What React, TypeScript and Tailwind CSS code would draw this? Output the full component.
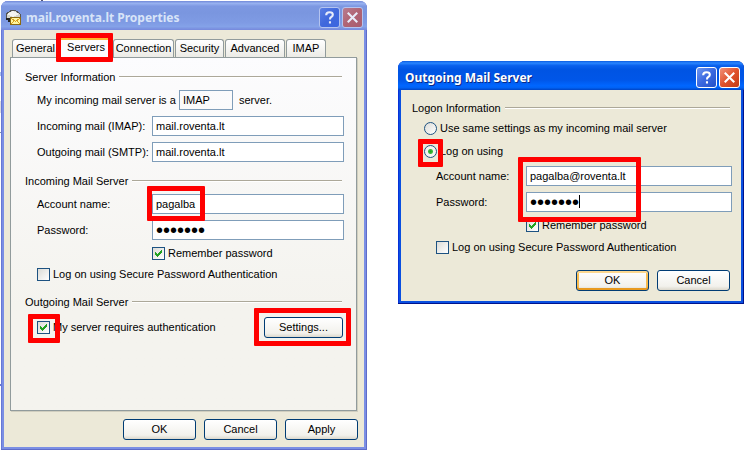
import { useState, type ReactNode } from 'react';
import clsx from 'clsx';

interface DialogProps {
  title: string;
  active?: boolean;
  icon?: ReactNode;
  className?: string;
  children: ReactNode;
}

function Dialog({ title, active = false, icon, className, children }: DialogProps) {
  return (
    <section
      aria-label={title}
      className={clsx(
        'flex min-w-0 flex-col rounded-t-[7px] px-[3px] pb-[3px]',
        active
          ? 'bg-[#0a50e0] shadow-[inset_-1px_-1px_0_#00138c,inset_1px_0_0_#0831d9]'
          : 'bg-[#7b8fe4] shadow-[inset_-1px_-1px_0_#5f6cc8,inset_1px_0_0_#6778d4]',
        className,
      )}
    >
      <header
        className={clsx(
          '-mx-[3px] flex h-[29px] shrink-0 items-center gap-1 rounded-t-[7px] pr-1 pt-1',
          active
            ? 'bg-[linear-gradient(#0a5ae0_0%,#2a86ff_7%,#0a60ec_16%,#0054e3_30%,#0056e8_65%,#0066ff_85%,#0062f5_92%,#0044c4_100%)] pl-[7px]'
            : 'bg-[linear-gradient(#7088d8_0%,#98b2f0_8%,#7d98e2_18%,#7a96df_40%,#7f9be4_75%,#84a2e8_88%,#7688dc_100%)] pl-1',
        )}
      >
        {icon}
        <h1
          className={clsx(
            'min-w-0 flex-1 truncate font-["Noto_Sans","Open_Sans",sans-serif] text-[12px] leading-4 font-bold',
            active ? 'text-white [text-shadow:1px_1px_0_#0a2a86]' : 'text-[#d8e4f8]',
          )}
        >
          {title}
        </h1>
        <div className="flex gap-0.5">
          <TitleButton label="Help" active={active}>
            <path d="M6.5 7.5Q6.5 4.5 10 4.5Q13.5 4.5 13.5 7Q13.5 8.5 11.8 9.5Q10.5 10.2 10.5 12.2M10.5 14V16.2" />
          </TitleButton>
          <TitleButton label="Close" active={active} close>
            <path d="M5 5L15 15M15 5L5 15" />
          </TitleButton>
        </div>
      </header>
      <div className="flex-1 bg-[#ece9d8]">{children}</div>
    </section>
  );
}

interface TitleButtonProps {
  label: string;
  active: boolean;
  close?: boolean;
  children: ReactNode;
}

function TitleButton({ label, active, close = false, children }: TitleButtonProps) {
  return (
    <button
      type="button"
      aria-label={label}
      className={clsx(
        'size-[21px] rounded-[3px] border',
        active ? 'border-white' : 'border-[#b4c4f0]',
        active && !close && 'bg-linear-to-br from-[#6f96f0] via-[#3a68e0] to-[#2450c8]',
        active && close && 'bg-linear-to-br from-[#f09078] via-[#e0522c] to-[#c43c14]',
        !active && !close && 'bg-linear-to-br from-[#5b7fe4] via-[#4068dc] to-[#3c66e0]',
        !active && close && 'bg-linear-to-br from-[#b87c90] via-[#b06474] to-[#a85c70]',
      )}
    >
      <svg viewBox="0 0 20 20" className="size-full" fill="none" stroke={active ? '#fff' : '#e8ecfa'} strokeWidth="2.2">
        {children}
      </svg>
    </button>
  );
}

function MailIcon() {
  return (
    <svg viewBox="0 0 17 17" className="size-[17px] shrink-0" shapeRendering="crispEdges">
      <path d="M1 5L7 1H10L15 5V9L12 12H5L1 8Z" fill="#d4d4cc" stroke="#555" />
      <path d="M2 5L8 2L14 5L8 8Z" fill="#f4f4f0" />
      <path d="M1 9H5V13H3V11H1Z" fill="#222" />
      <rect x="5.5" y="8.5" width="10" height="7" fill="#fff6a0" stroke="#8c6a10" />
      <path d="M6 9L10.5 12.5L15 9M6 15L9 12M15 15L12 12" fill="none" stroke="#d8a020" />
    </svg>
  );
}

// red marker drawn over the control it belongs to
function Mark({ className }: { className: string }) {
  return <span className={clsx('pointer-events-none absolute z-10 rounded-[1px] border-[5px] border-[#ff0000]', className)} />;
}

function GroupTitle({ children, className }: { children: ReactNode; className?: string }) {
  return (
    <h2 className={clsx('flex h-5 items-center gap-1 pr-0.5', className)}>
      {children}
      <span className="h-0.5 flex-1 border-b border-white bg-[#aca899]" />
    </h2>
  );
}

interface FieldProps {
  id: string;
  label: string;
  initial: string;
  type?: string;
  labelWidth?: string;
  className?: string;
  children?: ReactNode;
}

function Field({ id, label, initial, type = 'text', labelWidth = 'w-[115px]', className, children }: FieldProps) {
  const [value, setValue] = useState(initial);

  return (
    <div className={clsx('flex h-5 items-center', className)}>
      <label htmlFor={id} className={clsx('shrink-0', labelWidth)}>
        {label}
      </label>
      <div className="relative min-w-0 flex-1">
        <input
          id={id}
          type={type}
          value={value}
          onChange={(e) => setValue(e.target.value)}
          className={clsx(
            'block h-5 w-full border border-[#7f9db9] bg-white px-[3px] outline-none',
            type === 'password' && 'text-[20px]',
          )}
        />
        {children}
      </div>
    </div>
  );
}

interface TickProps {
  label: string;
  checked?: boolean;
  className?: string;
  children?: ReactNode;
}

function Tick({ label, checked = false, className, children }: TickProps) {
  return (
    <label className={clsx('flex h-[13px] items-center gap-[3px]', className)}>
      <span className="relative size-[13px] shrink-0">
        <input
          type="checkbox"
          defaultChecked={checked}
          className="peer block size-[13px] appearance-none border border-[#1d5281] bg-linear-to-br from-[#dcdcd7] to-white"
        />
        <svg
          viewBox="0 0 13 13"
          className="pointer-events-none absolute inset-0 hidden size-[13px] peer-checked:block"
          shapeRendering="crispEdges"
        >
          <path d="M3 5h1v1h1v1h1V6h1V5h1V4h1V3h1v3H9v1H8v1H7v1H6v1H5V9H4V8H3z" fill="#21a121" />
        </svg>
        {children}
      </span>
      {label}
    </label>
  );
}

function Radio({ label, checked = false, className, children }: TickProps) {
  return (
    <label className={clsx('flex h-[13px] items-center gap-[3px]', className)}>
      <span className="relative size-[13px] shrink-0">
        <input
          type="radio"
          name="logon"
          defaultChecked={checked}
          className="block size-[13px] appearance-none rounded-full border border-[#1d5281] bg-linear-to-br from-[#dcdcd7] to-white checked:bg-[radial-gradient(circle,#21a121_0,#3cb83c_2px,#f4f4f0_3px)]"
        />
        {children}
      </span>
      {label}
    </label>
  );
}

function PushButton({ children, primary = false, className }: { children: ReactNode; primary?: boolean; className?: string }) {
  return (
    <button
      type="button"
      className={clsx(
        'h-[21px] rounded-[3px] border border-[#003c74] bg-[linear-gradient(#ffffff,#f2f1ec_80%,#dcd8cc)] text-center',
        primary && 'shadow-[inset_0_2px_0_#fcd890,inset_0_-2px_0_#e89a20,inset_2px_0_0_#f8bc50,inset_-2px_0_0_#f8bc50]',
        className ?? 'w-[73px]',
      )}
    >
      {children}
    </button>
  );
}

const tabs = [
  { name: 'General', width: 'w-[47px]' },
  { name: 'Servers', width: 'w-[52px]' },
  { name: 'Connection', width: 'w-[61px]' },
  { name: 'Security', width: 'w-[49px]' },
  { name: 'Advanced', width: 'w-[60px]' },
  { name: 'IMAP', width: 'w-[40px]' },
];

function Tabs() {
  return (
    <div role="tablist" className="flex h-[27px] items-end gap-px pl-2">
      {tabs.map(({ name, width }) =>
        name === 'Servers' ? (
          <div key={name} className={clsx('relative z-10 -mb-px', width)}>
            <button
              type="button"
              role="tab"
              aria-selected
              className="block h-[21px] w-full rounded-t-[3px] border-x border-t-[3px] border-x-[#919b9c] border-t-[#ffb52c] bg-[#fcfcfe] pb-1"
            >
              {name}
            </button>
            <Mark className="-top-1 -right-px -bottom-1 -left-1" />
          </div>
        ) : (
          <button
            key={name}
            type="button"
            role="tab"
            aria-selected={false}
            className={clsx(
              'h-[18px] rounded-t-[3px] border border-b-0 border-[#919b9c] bg-linear-to-b from-white to-[#ecebe6]',
              width,
            )}
          >
            {name}
          </button>
        ),
      )}
    </div>
  );
}

function PropertiesDialog() {
  return (
    <Dialog title="mail.roventa.lt Properties" icon={<MailIcon />} className="mt-px">
      <Tabs />
      <div
        role="tabpanel"
        className="mr-[7px] ml-1.5 border border-[#919b9c] bg-linear-to-b from-[#fcfcfe] to-[#f4f3ee] to-70% pt-[9px] pr-3 pb-[72px] pl-3.5 shadow-[1px_1px_0_#d0cebf]"
      >
        <GroupTitle>Server Information</GroupTitle>
        <div className="mt-[3px] flex h-5 items-center pl-3">
          <label htmlFor="kind" className="w-[142px]">
            My incoming mail server is a
          </label>
          <input
            id="kind"
            readOnly
            value="IMAP"
            className="h-5 w-[54px] border border-[#7f9db9] bg-transparent px-[3px] outline-none"
          />
          <span className="pl-1.5">server.</span>
        </div>
        <Field id="incoming" label="Incoming mail (IMAP):" initial="mail.roventa.lt" className="mt-1.5 pl-3" />
        <Field id="outgoing" label="Outgoing mail (SMTP):" initial="mail.roventa.lt" className="mt-1.5 pl-3" />

        <GroupTitle className="mt-[9px]">Incoming Mail Server</GroupTitle>
        <Field id="account" label="Account name:" initial="pagalba" className="mt-[3px] pl-3">
          <Mark className="-top-2 -bottom-[7px] -left-[5px] w-[58px]" />
        </Field>
        <Field id="password" label="Password:" type="password" initial="pagalba" className="mt-1.5 pl-3" />
        <Tick label="Remember password" checked className="mt-[7px] ml-[127px]" />
        <Tick label="Log on using Secure Password Authentication" className="mt-2 ml-3" />

        <GroupTitle className="mt-[11px]">Outgoing Mail Server</GroupTitle>
        <div className="mt-[5px] flex items-center justify-between pr-px pl-3">
          <Tick label="My server requires authentication" checked>
            <Mark className="-top-[7px] -right-[10px] -bottom-[9px] -left-[9px]" />
          </Tick>
          <div className="relative flex">
            <PushButton className="w-[79px]">Settings...</PushButton>
            <Mark className="-top-[9px] -right-2 -bottom-2 -left-2.5" />
          </div>
        </div>
      </div>
      <div className="flex justify-end gap-2 pt-2 pr-1.5 pb-[7px]">
        <PushButton>OK</PushButton>
        <PushButton>Cancel</PushButton>
        <PushButton>Apply</PushButton>
      </div>
    </Dialog>
  );
}

function OutgoingDialog() {
  return (
    <Dialog title="Outgoing Mail Server" active className="mt-[61px]">
      <div className="pt-2 pr-[9px] pb-2.5 pl-[11px]">
        <GroupTitle>Logon Information</GroupTitle>
        <Radio label="Use same settings as my incoming mail server" className="mt-1 ml-3" />
        <Radio label="Log on using" checked className="mt-2.5 ml-3">
          <Mark className="-inset-x-1.5 -top-1.5 -bottom-[9px]" />
        </Radio>
        <Field
          id="out-account"
          label="Account name:"
          initial="pagalba@roventa.lt"
          labelWidth="w-[90px]"
          className="mt-2 pl-6"
        >
          <Mark className="-top-[9px] -left-2 h-[65px] w-[123px]" />
        </Field>
        <Field
          id="out-password"
          label="Password:"
          type="password"
          initial="pagalba"
          labelWidth="w-[90px]"
          className="mt-1.5 pl-6"
        >
          <span className="absolute top-[3px] left-[53px] h-[13px] w-px bg-black" />
        </Field>
        <Tick label="Remember password" checked className="mt-[7px] ml-[114px]" />
        <Tick label="Log on using Secure Password Authentication" className="mt-[9px] ml-6" />
        <div className="mt-4 flex justify-end gap-2 pr-0.5">
          <PushButton primary>OK</PushButton>
          <PushButton>Cancel</PushButton>
        </div>
      </div>
    </Dialog>
  );
}

// slivers of the window behind, left of the properties dialog
function BackdropEdge() {
  return (
    <>
      <span className="absolute top-0 left-[41px] h-px w-0.5 bg-[#555577]" />
      <span className="absolute top-[72px] left-0 h-1 w-px bg-[#a9c0f0]" />
      <span className="absolute top-[101px] left-0 h-3 w-px bg-[#dcdce0]" />
      <span className="absolute top-[132px] left-0 h-px w-px bg-[#7f8fa8]" />
      <span className="absolute top-[384px] left-0 h-0.5 w-px bg-[#6778d4]" />
    </>
  );
}

export default function App() {
  return (
    <main className='relative grid min-h-screen grid-cols-[366fr_346fr] items-start gap-x-[31px] bg-white pl-px font-["Liberation_Sans",Arial,sans-serif] text-[11px] leading-[13px] text-black'>
      <BackdropEdge />
      <PropertiesDialog />
      <OutgoingDialog />
    </main>
  );
}
